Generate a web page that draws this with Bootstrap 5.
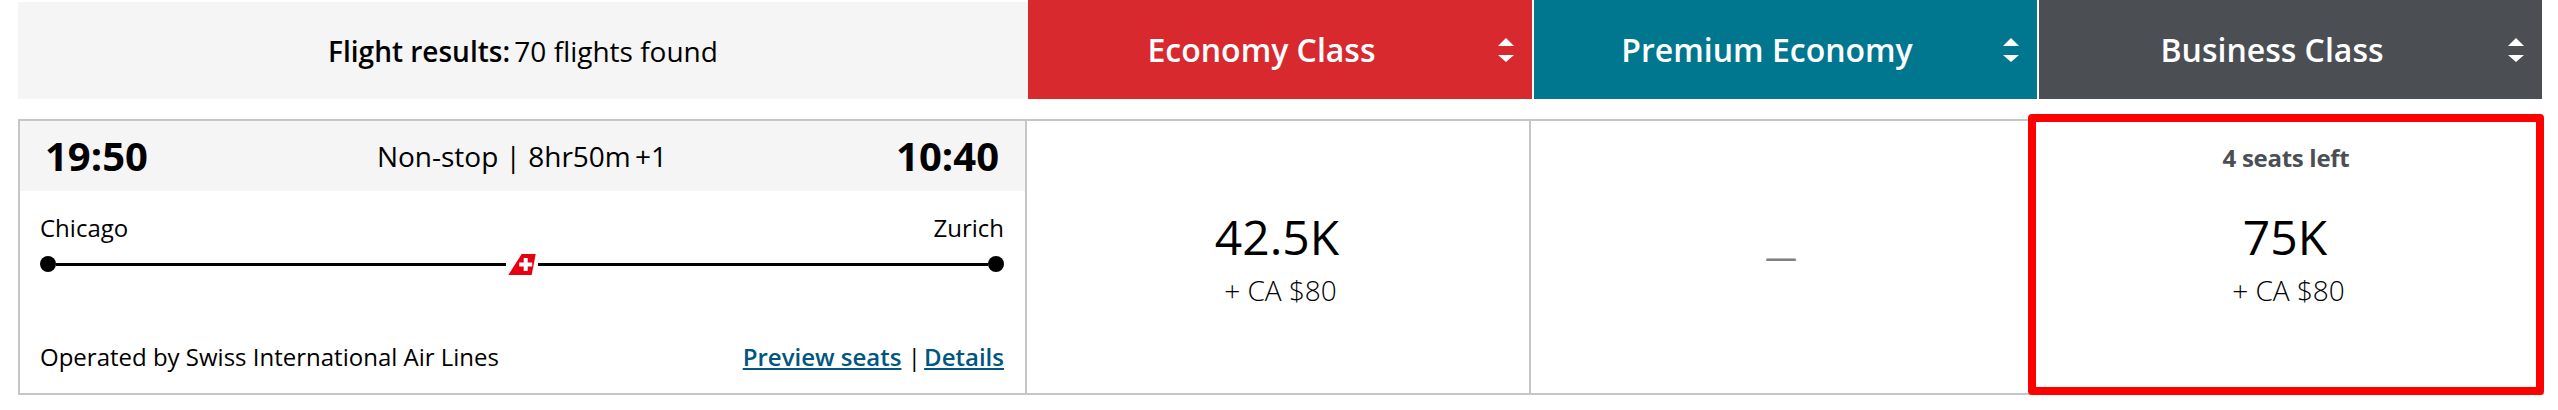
<!DOCTYPE html>
<html lang="en"><head><meta charset="utf-8"><title>Flight results</title>
<link href="https://cdn.jsdelivr.net/npm/bootstrap@5.3.0/dist/css/bootstrap.min.css" rel="stylesheet">
<style>
body{font-family:"Open Sans","Liberation Sans",sans-serif;color:#000;background:#fff;margin:0;overflow:hidden}
.hdr-row{height:99px;margin:0 16px 0 18px}
.hdr-summary{width:1010px;height:97px;margin-top:2px;background:#f5f5f5;font-size:28px}
.hdr-col{height:99px;color:#fff;font-size:32px;padding-right:18px}
.hdr-label{padding-right:3px}
.hdr-econ{width:504px;background:#d8292f;margin-right:2px}
.hdr-prem{width:503px;background:#00778f;margin-right:2px}
.hdr-biz{width:503px;background:#4b4f54}
.sort-ico{width:16px;height:24px;flex:none}
.res-row{height:276px;margin:20px 14px 0 18px;border:2px solid #c4c6c9;border-right:0}
.res-flight{width:1007px;border-right:2px solid #c4c6c9}
.res-econ{width:504px;border-right:2px solid #c4c6c9}
.res-biz{width:516px}
.time-band{height:70px;background:#f5f5f5;padding:0 26px 0 25px;font-size:28px}
.time-val{font-size:40px;font-weight:700;line-height:1}
.tight-gap{margin-left:-3px}
.flight-body{padding:0 21px 0 20px;font-size:24px}
.city-row{margin-top:20px;line-height:34px}
.track{height:24px;margin-top:7px}
.track-dot{width:16px;height:16px;background:#000;border-radius:50%;flex:none}
.track-line{height:3px;background:#000}
.tail{width:28px;height:21px;margin:0 2px;flex:none}
.flight-foot{margin-top:auto;margin-bottom:19px;line-height:34px}
.foot-link{color:#00567f;font-weight:600}
.pts{font-size:48px;line-height:60px;margin-bottom:5px;margin-right:2px}
.fee{font-size:28px;line-height:36px;font-weight:300;margin-left:5px}
.price-wrap{margin-top:1px}
.none-dash{font-size:32px;color:#808080;line-height:1;margin-left:3px}
.seats{position:absolute;top:20px;left:0;right:0;font-size:24px;font-weight:700;letter-spacing:-.3px;color:#4b4f54;line-height:34px}
.sel-box{position:absolute;inset:-7px 0 -2px 0;border:8px solid #f00;border-radius:4px;pointer-events:none}
</style></head>
<body>
<div class="hdr-row d-flex">
  <div class="hdr-summary d-flex align-items-center justify-content-center"><span><span class="fw-semibold">Flight results:</span> <span class="tight-gap">70 flights found</span></span></div>
  <div class="hdr-col hdr-econ d-flex align-items-center"><span class="hdr-label flex-grow-1 text-center fw-semibold">Economy Class</span>
    <svg class="sort-ico" viewBox="0 0 16 24"><path d="M8 0 16 8H0zM0 17H16L8 24z" fill="#fff"/></svg></div>
  <div class="hdr-col hdr-prem d-flex align-items-center"><span class="hdr-label flex-grow-1 text-center fw-semibold">Premium Economy</span>
    <svg class="sort-ico" viewBox="0 0 16 24"><path d="M8 0 16 8H0zM0 17H16L8 24z" fill="#fff"/></svg></div>
  <div class="hdr-col hdr-biz d-flex align-items-center"><span class="hdr-label flex-grow-1 text-center fw-semibold">Business Class</span>
    <svg class="sort-ico" viewBox="0 0 16 24"><path d="M8 0 16 8H0zM0 17H16L8 24z" fill="#fff"/></svg></div>
</div>
<div class="res-row d-flex">
  <div class="res-flight d-flex flex-column">
    <div class="time-band d-flex align-items-center justify-content-between">
      <span class="time-val">19:50</span><span>Non-stop | 8hr50m <span class="tight-gap">+1</span></span><span class="time-val">10:40</span>
    </div>
    <div class="flight-body d-flex flex-column flex-grow-1">
      <div class="city-row d-flex justify-content-between"><span>Chicago</span><span>Zurich</span></div>
      <div class="track d-flex align-items-center">
        <span class="track-dot"></span><span class="track-line flex-grow-1"></span>
        <svg class="tail" viewBox="0 0 28 21"><path d="M13.7 0H27.7L23.7 21H.3z" fill="#e60012"/><path d="M15.7 4h4v4.500h4.500v4h-4.500v4.500h-4v-4.500h-4.500v-4h4.500z" fill="#fff"/></svg>
        <span class="track-line flex-grow-1"></span><span class="track-dot"></span>
      </div>
      <div class="flight-foot d-flex justify-content-between"><span>Operated by Swiss International Air Lines</span>
        <span><a class="foot-link" href="#">Preview seats</a> | <a class="foot-link tight-gap" href="#">Details</a></span></div>
    </div>
  </div>
  <div class="res-econ d-flex align-items-center justify-content-center text-center">
    <div class="price-wrap"><div class="pts">42.5K</div><div class="fee">+ CA $80</div></div>
  </div>
  <div class="flex-grow-1 d-flex align-items-center justify-content-center"><span class="none-dash">—</span></div>
  <div class="res-biz position-relative d-flex align-items-center justify-content-center text-center">
    <div class="seats">4 seats left</div>
    <div class="price-wrap"><div class="pts">75K</div><div class="fee">+ CA $80</div></div>
    <div class="sel-box"></div>
  </div>
</div>
<script src="https://cdn.jsdelivr.net/npm/bootstrap@5.3.0/dist/js/bootstrap.bundle.min.js"></script>
</body></html>
